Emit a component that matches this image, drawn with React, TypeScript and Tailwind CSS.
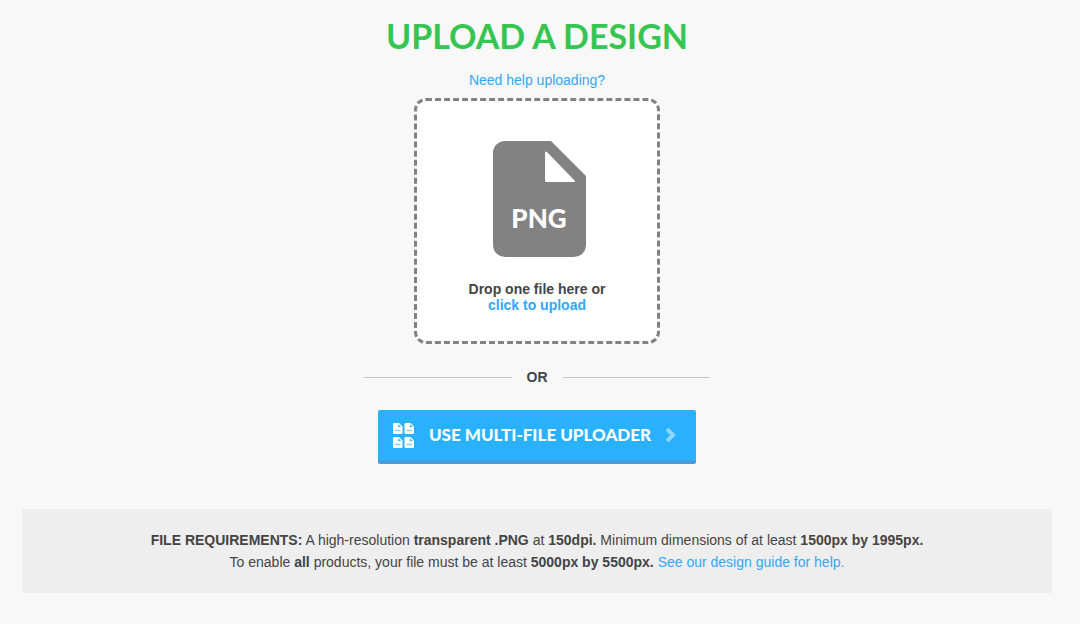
import React, { useState } from 'react';

const FileIcon: React.FC = () => (
  <svg width="93" height="116" viewBox="0 0 93 116" className="ml-1" role="img" aria-label="PNG">
    <path
      fill="#828282"
      fillRule="evenodd"
      d="M12 0H58L93 35V104a12 12 0 0 1-12 12H12A12 12 0 0 1 0 104V12A12 12 0 0 1 12 0ZM52 12V39.500Q52 41 53.500 41H81Q83 41 81.500 39.500L54 11Q52 9.500 52 12Z"
    />
    <text x="46" y="87" textAnchor="middle" fill="#fff" className="font-['Lato',sans-serif] text-[26px] font-black">
      PNG
    </text>
  </svg>
);

const pages = [
  { x: 0, y: 0 },
  { x: 11.5, y: 0 },
  { x: 0, y: 14 },
  { x: 11.5, y: 14 },
];

const MultiFileIcon: React.FC = () => (
  <svg width="21" height="25" viewBox="0 0 21 25" aria-hidden="true">
    {pages.map((page) => (
      <g key={`${page.x}-${page.y}`} transform={`translate(${page.x} ${page.y})`}>
        <path fill="#fff" d="M1.200 0H6L9.500 3.500V9.800Q9.500 11 8.300 11H1.200Q0 11 0 9.800V1.200Q0 0 1.200 0Z" />
        <path fill="#29b1fd" d="M5.300 1.200V4.100H8.200Z" />
        <path stroke="#29b1fd" strokeWidth="1.400" strokeOpacity="0.600" d="M2 7.500H7.500" />
      </g>
    ))}
  </svg>
);

const ChevronIcon: React.FC = () => (
  <svg width="11" height="16" viewBox="0 0 11 16" fill="none" aria-hidden="true">
    <path d="M2 2L8 8L2 14" stroke="#8fd5fe" strokeWidth="4" />
  </svg>
);

const App: React.FC = () => {
  const [fileName, setFileName] = useState<string | null>(null);

  const handleFileChange = (event: React.ChangeEvent<HTMLInputElement>) => {
    setFileName(event.target.files?.[0]?.name ?? null);
  };

  return (
    <main className="min-h-screen bg-[#f8f8f8] pt-4 pr-7 pb-8 pl-[22px] font-['Liberation_Sans',Arial,sans-serif] text-sm text-[#444]">
      <div className="flex flex-col items-center">
        <h1 className="text-center font-['Lato',sans-serif] text-[34px] leading-10 font-bold text-[#35c652]">
          UPLOAD A DESIGN
        </h1>
        <a href="#help" className="mt-4 leading-4 text-[#2fa8fc] hover:underline">
          Need help uploading?
        </a>

        <label
          htmlFor="design-file"
          className="relative mt-[10px] flex w-[246px] cursor-pointer flex-col items-center rounded-xl border-3 border-dashed border-[#828282] bg-white pt-10 pb-7 text-center"
        >
          <FileIcon />
          <span className="mt-6 leading-4 font-bold">
            {fileName ?? 'Drop one file here or'}
            <br />
            <span className="text-[#2fa8fc]">click to upload</span>
          </span>
          <input id="design-file" type="file" accept="image/png" className="sr-only" onChange={handleFileChange} />
        </label>

        <div className="mt-6 flex w-full max-w-[346px] items-center gap-[15px]">
          <span className="h-px flex-1 bg-[#c6c6c6]" />
          <span className="leading-[18px] font-bold">OR</span>
          <span className="h-px flex-1 bg-[#c6c6c6]" />
        </div>

        <button
          type="button"
          className="mt-6 flex cursor-pointer items-center rounded-xs border-b-4 border-[#4a9bd9] bg-[#29b1fd] py-3 pr-5 pl-[15px] text-white hover:bg-[#1ea5f0]"
        >
          <MultiFileIcon />
          <span className="mr-[14px] ml-[15px] font-['Lato',sans-serif] text-[17px] leading-[26px] font-black">
            USE MULTI-FILE UPLOADER
          </span>
          <ChevronIcon />
        </button>
      </div>

      <section className="mt-[45px] bg-[#eee] px-4 py-5 text-center leading-[22px]">
        <p>
          <strong>FILE REQUIREMENTS:</strong> A high-resolution <strong>transparent .PNG</strong> at{' '}
          <strong>150dpi.</strong> Minimum dimensions of at least <strong>1500px by 1995px.</strong>
        </p>
        <p>
          To enable <strong>all</strong> products, your file must be at least <strong>5000px by 5500px.</strong>{' '}
          <a href="#design-guide" className="text-[#2fa8fc] hover:underline">
            See our design guide for help.
          </a>
        </p>
      </section>
    </main>
  );
};

export default App;
